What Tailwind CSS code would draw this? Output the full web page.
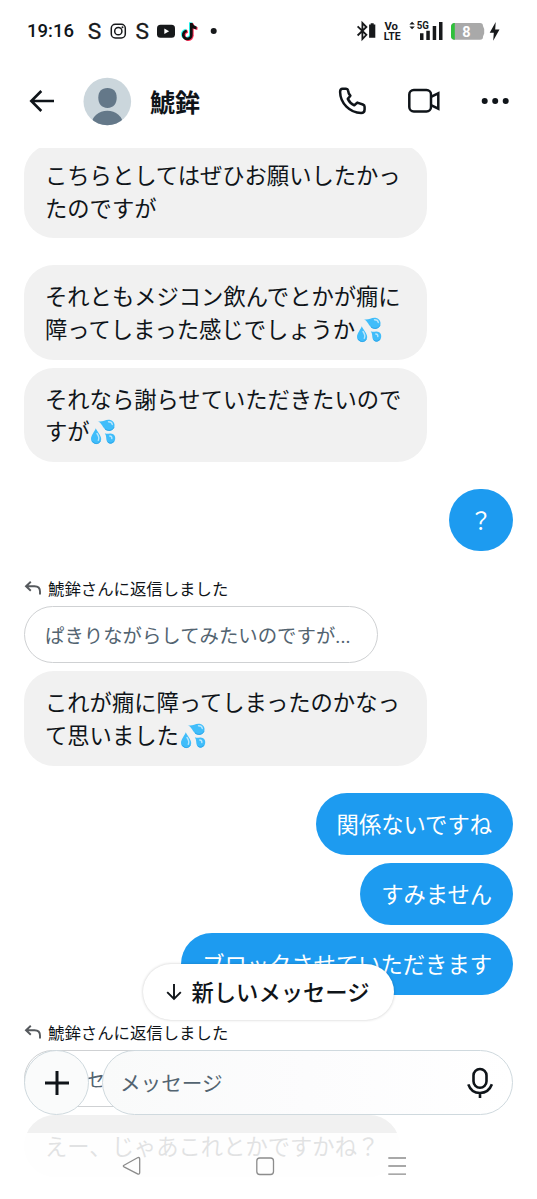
<!DOCTYPE html>
<html lang="ja">
<head>
<meta charset="utf-8">
<title>メッセージ</title>
<script src="https://cdn.jsdelivr.net/npm/@tailwindcss/browser@4"></script>
</head>
<body class="bg-white">
<svg class="hidden">
  <symbol id="sweat" viewBox="0 0 26 26">
    <path d="M5.8 9.2C4.7 12.500 1 16 1 20a5 5 0 0 0 10.200 0C11.200 16 7 12.500 5.800 9.200Z" fill="#40bdfa"/>
    <path d="M7.700 2.300C12.500 3.400 15 .4 19.500.8a5.500 5.500 0 0 1 5 6.500c-.7 4.500-6 5.800-9.200 3.200C12.500 8.300 12 4.300 7.700 2.300Z" fill="#40bdfa"/>
    <path d="M14.800 14.600c3.200.5 6-1 8.400.6 2.600 1.900 2.400 5 1.200 7.300-1.500 2.600-5.300 2.900-7 .6-1.800-2.500-.4-5.800-2.600-8.500Z" fill="#40bdfa"/>
    <path d="M7 14.500c1.600 2.300 2.400 4.700 1.300 6.800M18.500 2.800c2 0 3.500 1 3.800 2.700M19.800 17c1.400.2 2.200 1.200 2 2.600" fill="none" stroke="#b9e6fc" stroke-width="1.400" stroke-linecap="round"/>
    <path d="M2.500 22.300c1.800 3 6 3 7.700.1M15 9.900c3 2.500 7.500 1.800 9-1.500M17.600 22.800c1.800 1.900 4.600 1.600 5.900-.4" fill="none" stroke="#2aa3e8" stroke-width="1"/>
  </symbol>
  <symbol id="reply" viewBox="0 0 18 16">
    <path d="M6.800 1.800 2 6.300l4.800 4.500M2.300 6.300h8.200c3.600 0 5.500 2 5.500 5.200v3" fill="none" stroke="#55595d" stroke-width="1.900"/>
  </symbol>
</svg>
<div class="relative flex h-[1199px] w-[537px] flex-col overflow-hidden bg-white font-['Noto_Sans_CJK_JP',sans-serif] text-[#0f1419]">

  <header class="relative z-10 flex h-[148px] shrink-0 flex-col bg-white">
    <div class="flex h-[62px] items-center pl-[27px] font-[Roboto,sans-serif]">
      <span class="w-[60px] text-[18.500px] leading-[22px] font-medium whitespace-nowrap">19:16</span>
      <svg class="h-[62px] w-[450px]" viewBox="87 0 450 62" fill="#17191b">
        <text x="87.700" y="38.900" font-size="22" textLength="13.500" lengthAdjust="spacingAndGlyphs" stroke="#17191b" stroke-width=".3">S</text>
        <text x="135.600" y="38.900" font-size="22" textLength="13.500" lengthAdjust="spacingAndGlyphs" stroke="#17191b" stroke-width=".3">S</text>
        <g fill="none" stroke="#17191b" stroke-width="1.500"><rect x="111.300" y="24.300" width="14" height="13.700" rx="4"/><circle cx="118.300" cy="31.200" r="3.600"/></g>
        <circle cx="122.500" cy="27.200" r="1"/>
        <rect x="157" y="24.800" width="18" height="13" rx="3.500"/><path d="m164.300 28.500 4.800 2.800-4.800 2.800z" fill="#fff"/>
        <g fill="none" stroke-width="2.700">
          <path d="M191.300 23v11.700a4 4 0 1 1-4.500-3.800M191.300 23c.3 2.800 2.200 4.500 5.200 4.900" stroke="#25f4ee" transform="translate(-.9 -.7)"/>
          <path d="M191.300 23v11.700a4 4 0 1 1-4.500-3.800M191.300 23c.3 2.800 2.200 4.500 5.200 4.900" stroke="#fe2c55" transform="translate(1 .7)"/>
          <path d="M191.300 23v11.700a4 4 0 1 1-4.500-3.800M191.300 23c.3 2.800 2.200 4.500 5.200 4.900" stroke="#101010"/>
        </g>
        <circle cx="213.700" cy="31" r="3"/>
        <path d="m357.600 26.300 8.800 8.500-4 4.200V23l4 4-8.800 8.500" fill="none" stroke="#17191b" stroke-width="1.800"/>
        <path d="M370.700 23.300h3v1.200h1.600V37.700h-6.200V24.500h1.600z"/>
        <text x="384.400" y="29.900" font-size="10.700" font-weight="700" textLength="13.500" lengthAdjust="spacingAndGlyphs">Vo</text>
        <text x="383.800" y="39.700" font-size="10.700" font-weight="700" textLength="17" lengthAdjust="spacingAndGlyphs">LTE</text>
        <path d="m409.400 24.600 2.700-2.800 2.700 2.800zM409.400 26.500l2.700 2.800 2.700-2.800z"/>
        <text x="416.800" y="29" font-size="10.300" font-weight="700" textLength="12.200" lengthAdjust="spacingAndGlyphs">5G</text>
        <path d="M420 33.300h3.500V40H420zM426.300 30.800h3.500V40h-3.500zM432.700 26h3.500v14h-3.500zM439 22h3.500v18H439z"/>
        <path d="M454.500 23h25.500a3 3 0 0 1 3 3l1.200 3v4.500l-1.200 3a3 3 0 0 1-3 3.200h-25.500a3.500 3.500 0 0 1-3.500-3.500V26.500a3.500 3.500 0 0 1 3.500-3.500z" fill="#a9a9a9"/>
        <path d="M454.800 23v16.700a3.500 3.500 0 0 1-3.800-3.500V26.500a3.500 3.500 0 0 1 3.800-3.500z" fill="#2fc03b"/>
        <text x="462.200" y="36.700" font-size="14.500" font-weight="700" fill="#fff">8</text>
        <path d="m495.700 22-6 10.800h4.100l-.6 8 6.300-11.200h-4.300z"/>
      </svg>
    </div>
    <div class="flex h-[78px] items-center pl-[28px] pr-[27px]">
      <svg class="size-[28px]" viewBox="28 87 28 28"><path d="M54 101H31.500M41.300 91 31.300 101l10 10" fill="none" stroke="#0f1419" stroke-width="2.600"/></svg>
      <svg class="ml-[27px] size-[49px]" viewBox="83 76.500 49 49">
        <clipPath id="face"><circle cx="107.300" cy="101" r="23.800"/></clipPath>
        <circle cx="107.300" cy="101" r="23.800" fill="#cbd6dc"/>
        <g clip-path="url(#face)" fill="#647889"><path d="M107.500 87.500c6 0 9.200 3.800 9.200 9.500 0 6-3 10.400-9.200 10.400s-9.200-4.400-9.200-10.400c0-5.700 3.200-9.500 9.200-9.500z"/><ellipse cx="107.300" cy="124" rx="15.700" ry="13.700"/></g>
      </svg>
      <h1 class="ml-[18px] flex-1 text-[25px] leading-[36px] font-bold">鯱鉾</h1>
      <svg class="h-[40px] w-[175px]" viewBox="335 81 175 40" fill="none" stroke="#0f1419" stroke-width="2.500">
        <path d="M342.500 88.700h3.600c1.100 0 1.700.5 1.900 1.500l.8 3.300 1.600 2.300-2.600 3.100c1.400 3 3.400 5 6.500 6.400l3-2.700 5.500 1.900c1.300.5 1.800 1.100 1.800 2.300v2.700c0 2.100-1.300 3.500-3.500 3.500-11.300-.2-20.800-9.700-21-21 0-2 .6-3.300 2.400-3.300z" stroke-linejoin="round"/>
        <rect x="409.300" y="90" width="21.700" height="21.500" rx="4.500"/>
        <path d="m431.500 96.700 6.800-3.400v15.400l-6.800-3.400"/>
        <g fill="#0f1419" stroke="none"><circle cx="484.700" cy="101" r="3"/><circle cx="495.200" cy="101" r="3"/><circle cx="505.700" cy="101" r="3"/></g>
      </svg>
    </div>
  </header>

  <main class="-mt-[4.500px] flex shrink-0 flex-col items-start px-6 text-[22.300px] leading-[32.500px]">
    <p class="h-[94px] w-[403px] rounded-[30px] bg-[#f1f1f1] pt-[14.500px] pl-[21px] whitespace-nowrap">こちらとしてはぜひお願いしたかっ<br>たのですが</p>
    <p class="mt-[27.500px] h-[94.500px] w-[403px] rounded-[30px] bg-[#f1f1f1] pt-[14px] pl-[21px] whitespace-nowrap">それともメジコン飲んでとかが癇に<br>障ってしまった感じでしょうか<svg class="inline-block ml-[1px] size-[26px] align-[-5px]"><use href="#sweat"/></svg></p>
    <p class="mt-2 h-[94.500px] w-[403px] rounded-[30px] bg-[#f1f1f1] pt-[14px] pl-[21px] whitespace-nowrap">それなら謝らせていただきたいので<br>すが<svg class="inline-block size-[26px] align-[-5px]"><use href="#sweat"/></svg></p>
    <p class="mt-[26.500px] h-[62.500px] self-end rounded-[31px] bg-[#1d9bf0] px-[21px] pt-[14px] text-white">？</p>
    <div class="mt-[26px] flex h-[22px] items-center text-[16.400px] leading-[22px]"><svg class="mr-[6px] h-[16px] w-[18px]"><use href="#reply"/></svg>鯱鉾さんに返信しました</div>
    <p class="mt-[7px] h-[57px] w-[354px] rounded-full border-[1.500px] border-[#cfd1d3] pl-[20px] text-[19.400px] leading-[56px] whitespace-nowrap text-[#536471]">ぱきりながらしてみたいのですが<span class="font-[Roboto]">...</span></p>
    <p class="mt-2 h-[94.500px] w-[403px] rounded-[30px] bg-[#f1f1f1] pt-[14px] pl-[21px] whitespace-nowrap">これが癇に障ってしまったのかなっ<br>て思いました<svg class="inline-block ml-[1px] size-[26px] align-[-5px]"><use href="#sweat"/></svg></p>
    <p class="mt-[27px] h-[62px] self-end rounded-full bg-[#1d9bf0] px-[21px] pt-[14px] text-white">関係ないですね</p>
    <p class="mt-2 h-[62px] self-end rounded-full bg-[#1d9bf0] px-[21px] pt-[14px] text-white">すみません</p>
    <p class="mt-2 h-[62px] self-end rounded-full bg-[#1d9bf0] px-[21px] pt-[14px] text-white">ブロックさせていただきます</p>
    <div class="mt-[26px] flex h-[22px] items-center text-[16.400px] leading-[22px]"><svg class="mr-[6px] h-[16px] w-[18px]"><use href="#reply"/></svg>鯱鉾さんに返信しました</div>
    <p class="mt-[7px] h-[57px] w-[220px] rounded-full border-[1.500px] border-[#cfd1d3] pl-[22px] text-[19.400px] leading-[56px] whitespace-nowrap text-[#536471]">メッセージ</p>
    <p class="mt-2 h-[62px] rounded-full bg-[#f1f1f1] px-[21px] pt-[14px] whitespace-nowrap">えー、じゃあこれとかですかね？</p>
  </main>

  <nav class="absolute inset-x-0 top-[1133px] h-[66px] bg-white/88">
    <svg class="h-[66px] w-[537px]" viewBox="0 1133 537 66" fill="none" stroke="#8c8c8c" stroke-width="1.300">
      <path d="m124 1165.300 13.500-7.500c1.300-.7 2.200-.1 2.200 1.300v13.500c0 1.400-.9 2-2.200 1.300l-13.500-7c-.9-.5-.9-1.100 0-1.600z"/>
      <rect x="256.800" y="1158" width="16.700" height="16.500" rx="3"/>
      <path d="M388.300 1158H406M388.300 1166H406M388.300 1174.200H406"/>
    </svg>
  </nav>

  <div class="absolute top-[1050px] left-6 flex h-[65px] gap-[13px]">
    <button class="grid size-[65px] place-items-center rounded-full border border-[#cfd9de] bg-[#fafbfb]"><svg class="size-[26px]" viewBox="0 0 26 26"><path d="M13 1v24M1 13h24" stroke="#0f1419" stroke-width="3"/></svg></button>
    <div class="flex w-[411px] items-center justify-between rounded-full border border-[#cfd9de] bg-linear-to-r from-[#f9fafa] via-[#fcfcfd] to-white pr-[18px] pl-[17px]">
      <span class="text-[20.600px] text-[#536471]">メッセージ</span>
      <svg class="h-[32px] w-[28px]" viewBox="466 1067 28 32" fill="none" stroke="#0f1419" stroke-width="2.600"><rect x="473.500" y="1069" width="13" height="18.700" rx="6.500"/><path d="M468.300 1084.300c2 5.800 6.200 8.700 11.700 8.700s9.700-2.900 11.900-8.700M480 1093v5"/></svg>
    </div>
  </div>

  <button class="absolute top-[963.500px] left-[142.500px] flex h-[56px] w-[251px] items-center rounded-full bg-white pl-[22px] shadow-[0_0_3px_rgba(0,0,0,0.22)]">
    <svg class="mr-[9px] size-[18px]" viewBox="0 0 18 18"><path d="M9 1v15M2.200 9.200 9 16l6.800-6.800" fill="none" stroke="#0f1419" stroke-width="1.900"/></svg>
    <span class="-mt-[2px] text-[22.300px] leading-[32px] font-medium whitespace-nowrap">新しいメッセージ</span>
  </button>
</div>
</body>
</html>
